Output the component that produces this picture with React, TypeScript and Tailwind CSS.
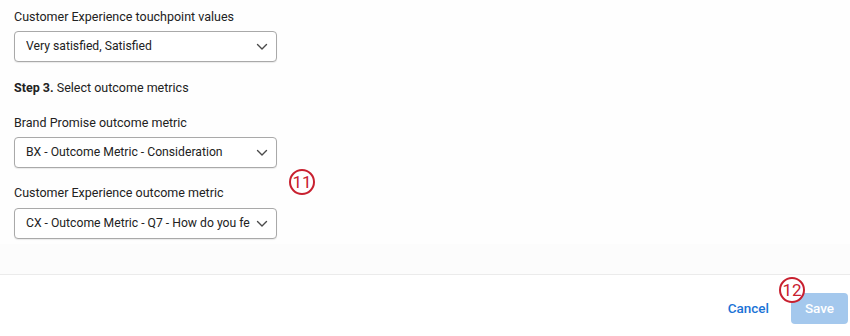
import React from "react";

function Chevron() {
  return (
    <svg width="12" height="8" viewBox="0 0 12 8" fill="none">
      <path d="M1.5 1.5 L6 6 L10.5 1.5" stroke="#4a4a4a" strokeWidth="1.4" strokeLinecap="round" strokeLinejoin="round" />
    </svg>
  );
}

function Select({ value }: { value: string }) {
  return (
    <div className="flex h-[31px] w-[263px] items-center rounded-[4px] border border-[#a9a9a9] bg-white pl-[11px] pr-[8px] shadow-[0_1px_1px_rgba(0,0,0,0.08)]">
      <span className="flex-1 overflow-hidden whitespace-nowrap text-[12.2px] text-[#222]">{value}</span>
      <span className="ml-1 flex w-[12px] shrink-0 items-center justify-center">
        <Chevron />
      </span>
    </div>
  );
}

function Badge({ n }: { n: string }) {
  return (
    <div className="flex h-[26px] w-[26px] items-center justify-center rounded-full border-2 border-[#c8202f] bg-white text-[17px] leading-none text-[#c8202f]">
      {n}
    </div>
  );
}

export default function App() {
  return (
    <div className="relative h-[336px] w-[850px] overflow-hidden bg-white" style={{ fontFamily: "Roboto, 'Liberation Sans', sans-serif" }}>
      <div className="flex h-[274px] flex-col bg-[#fefefe]">
        <div className="flex flex-col pl-[14px] pt-[9px]">
          <div className="text-[12.5px] leading-[16px] text-[#222]">Customer Experience touchpoint values</div>
          <div className="mt-[6px]"><Select value="Very satisfied, Satisfied" /></div>
          <div className="mt-[18px] text-[12.5px] leading-[16px] text-[#222]">
            <span className="font-bold">Step 3.</span> Select outcome metrics
          </div>
          <div className="mt-[19px] text-[12.5px] leading-[16px] text-[#222]">Brand Promise outcome metric</div>
          <div className="mt-[6px]"><Select value="BX - Outcome Metric - Consideration" /></div>
          <div className="mt-[17px] text-[12.5px] leading-[16px] text-[#222]">Customer Experience outcome metric</div>
          <div className="mt-[7px]"><Select value="CX - Outcome Metric - Q7 - How do you fe" /></div>
        </div>
        <div className="mt-auto h-[30px] bg-[#fcfcfc]" />
      </div>
      <div className="h-px bg-[#ebebeb]" />
      <div className="flex items-center justify-end gap-[22px] pr-[2px] pt-[18px]">
        <span className="text-[13.5px] font-medium text-[#1a73d6]">Cancel</span>
        <div className="flex h-[31px] w-[57px] items-center justify-center rounded-[4px] bg-[#a4c8ed] text-[13.5px] font-medium text-white">Save</div>
      </div>
      <div className="absolute left-[289px] top-[169px]"><Badge n="11" /></div>
      <div className="absolute left-[779px] top-[277px]"><Badge n="12" /></div>
    </div>
  );
}
